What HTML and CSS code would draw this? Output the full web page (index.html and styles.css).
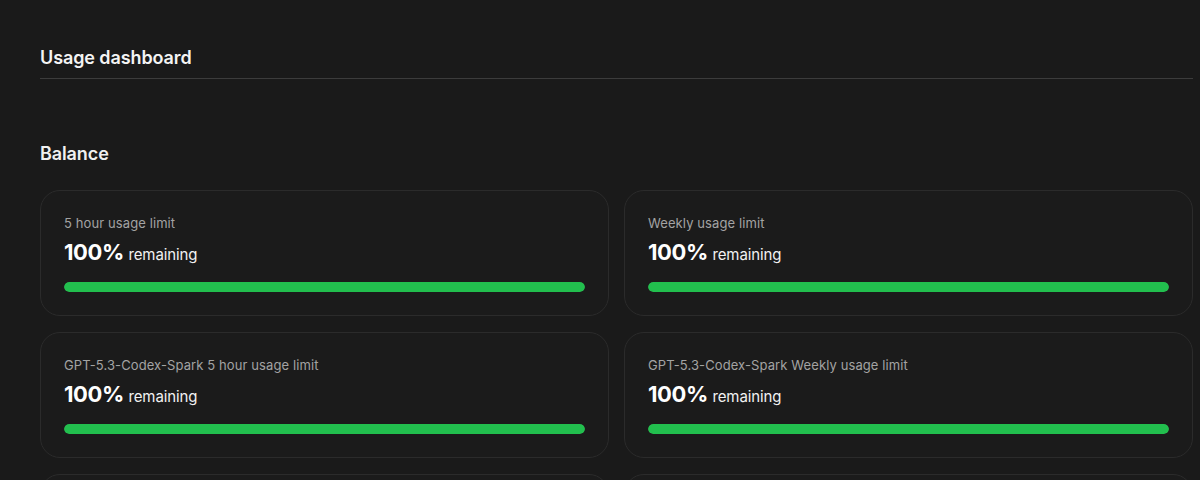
FILE: index.html
```html
<!DOCTYPE html>
<html lang="en">
<head>
<meta charset="utf-8">
<title>Usage dashboard</title>
<link rel="stylesheet" href="styles.css">
</head>
<body>
<main class="page">
  <header class="page-header">
    <h1 class="page-title">Usage dashboard</h1>
  </header>
  <section class="balance">
    <h2 class="section-title">Balance</h2>
    <div class="cards">
      <div class="card">
        <div class="card-label">5 hour usage limit</div>
        <div class="card-value"><span class="pct">100%</span> <span class="rem">remaining</span></div>
        <div class="bar"><div class="bar-fill" style="width:100%"></div></div>
      </div>
      <div class="card">
        <div class="card-label">Weekly usage limit</div>
        <div class="card-value"><span class="pct">100%</span> <span class="rem">remaining</span></div>
        <div class="bar"><div class="bar-fill" style="width:100%"></div></div>
      </div>
      <div class="card">
        <div class="card-label">GPT-5.3-Codex-Spark 5 hour usage limit</div>
        <div class="card-value"><span class="pct">100%</span> <span class="rem">remaining</span></div>
        <div class="bar"><div class="bar-fill" style="width:100%"></div></div>
      </div>
      <div class="card">
        <div class="card-label">GPT-5.3-Codex-Spark Weekly usage limit</div>
        <div class="card-value"><span class="pct">100%</span> <span class="rem">remaining</span></div>
        <div class="bar"><div class="bar-fill" style="width:100%"></div></div>
      </div>
      <div class="card card-placeholder"></div>
      <div class="card card-placeholder"></div>
    </div>
  </section>
</main>
</body>
</html>
```
FILE: styles.css
```css
* { box-sizing: border-box; }
html, body {
  margin: 0;
  padding: 0;
  background: #1a1a1a;
  color: #f2f2f2;
  font-family: Inter, "Noto Sans", "Liberation Sans", sans-serif;
  overflow: hidden;
}
.page {
  padding: 46px 7px 0 40px;
}
.page-header {
  border-bottom: 1px solid #3c3c3c;
  padding-bottom: 8px;
}
.page-title {
  margin: 0;
  font-size: 18px;
  line-height: 24px;
  font-weight: 600;
  color: #f4f4f4;
  letter-spacing: -0.1px;
}
.balance {
  padding-top: 63px;
}
.section-title {
  margin: 0 0 24px;
  font-size: 18px;
  line-height: 24px;
  font-weight: 600;
  color: #f0f0f0;
  letter-spacing: -0.1px;
}
.cards {
  display: grid;
  grid-template-columns: 1fr 1fr;
  column-gap: 15px;
  row-gap: 16px;
}
.card {
  border: 1px solid #2b2b2b;
  border-radius: 20px;
  background: #1b1b1b;
  padding: 23px;
}
.card-placeholder {
  height: 126px;
}
.card-label {
  font-size: 13px;
  line-height: 18px;
  color: #a3a3a3;
  letter-spacing: 0.1px;
}
.card-value {
  margin-top: 6px;
  line-height: 28px;
  height: 28px;
  white-space: nowrap;
}
.pct {
  font-size: 22px;
  font-weight: 700;
  color: #ffffff;
  letter-spacing: -0.4px;
}
.rem {
  font-size: 15px;
  color: #f2f2f2;
  letter-spacing: -0.1px;
}
.bar {
  margin-top: 16px;
  height: 10px;
  border-radius: 5px;
  background: #2e2e2e;
  overflow: hidden;
}
.bar-fill {
  height: 100%;
  border-radius: 5px;
  background: #22bf4e;
}
```
